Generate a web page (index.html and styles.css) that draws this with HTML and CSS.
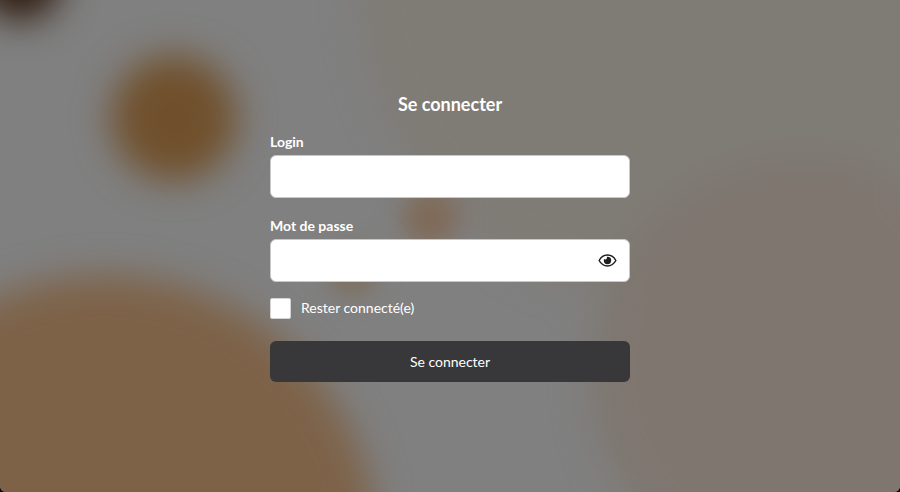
FILE: index.html
```html
<!DOCTYPE html>
<html lang="fr">
<head>
    <meta charset="UTF-8">
    <meta name="viewport" content="width=device-width, initial-scale=1.0">
    <title>Se connecter</title>
    <link rel="stylesheet" href="styles.css">
</head>
<body>
    <main class="page">
        <svg class="backdrop" viewBox="0 0 900 492" preserveAspectRatio="xMidYMid slice" aria-hidden="true">
            <defs>
                <filter id="blur" x="-60%" y="-60%" width="220%" height="220%" color-interpolation-filters="sRGB">
                    <feGaussianBlur stdDeviation="18"/>
                </filter>
                <filter id="blur-small" x="-60%" y="-60%" width="220%" height="220%" color-interpolation-filters="sRGB">
                    <feGaussianBlur stdDeviation="12"/>
                </filter>
            </defs>
            <g filter="url(#blur)">
                <circle cx="670" cy="-10" r="310" fill="#7f7b75"/>
                <circle cx="805" cy="375" r="215" fill="#7e766f"/>
                <circle cx="105" cy="547" r="272" fill="#7d6248"/>
                <circle cx="174" cy="118" r="63" fill="#70502c"/>
                <circle cx="20" cy="-22" r="42" fill="#2c190c"/>
            </g>
            <g filter="url(#blur-small)">
                <circle cx="430" cy="218" r="28" fill="#7f6a58"/>
                <circle cx="352" cy="272" r="24" fill="#7d6e5d"/>
            </g>
        </svg>

        <form class="login-form">
            <h1>Se connecter</h1>

            <div class="form-group">
                <label for="login">Login</label>
                <input type="text" id="login" class="text-input" autocomplete="username">
            </div>

            <div class="form-group">
                <label for="password">Mot de passe</label>
                <div class="password-field">
                    <input type="password" id="password" autocomplete="current-password">
                    <button type="button" class="toggle-password" aria-label="Afficher le mot de passe">
                        <svg viewBox="0 0 20 14" aria-hidden="true">
                            <path d="M1 7C3 3.300 6.200 1.200 10 1.200S17 3.300 19 7C17 10.700 13.800 12.800 10 12.800S3 10.700 1 7Z" fill="none" stroke="currentColor" stroke-width="1.600" stroke-linejoin="round"/>
                            <path d="M10 3a4 4 0 1 1-4 4c0-.5.1-1 .3-1.500.4.3.8.5 1.300.5A2 2 0 0 0 9.200 3.100c.3-.1.5-.1.800-.1Z" fill="currentColor"/>
                        </svg>
                    </button>
                </div>
            </div>

            <div class="remember">
                <input type="checkbox" id="remember">
                <label for="remember">Rester connecté(e)</label>
            </div>

            <button type="submit" class="btn-primary">Se connecter</button>
        </form>
    </main>
</body>
</html>
```

FILE: styles.css
```css
* {
    margin: 0;
    padding: 0;
    box-sizing: border-box;
}

body {
    font-family: Lato, sans-serif;
    font-size: 14px;
    line-height: 20px;
    color: white;
    background: #080c06;
}

.page {
    position: relative;
    min-height: 100vh;
    display: flex;
    align-items: center;
    justify-content: center;
    background: #808080;
    border-radius: 0 0 6px 6px;
    overflow: hidden;
}

.backdrop {
    position: absolute;
    inset: 0;
    width: 100%;
    height: 100%;
}

.login-form {
    position: relative;
    width: 40%;
    min-width: 280px;
    padding-bottom: 18px;
}

h1 {
    font-size: 18px;
    line-height: 24px;
    font-weight: 700;
    text-align: center;
    margin-bottom: 16px;
}

.form-group {
    margin-bottom: 18px;
}

.form-group label {
    display: block;
    font-weight: 700;
    margin-bottom: 3px;
}

.text-input,
.password-field {
    display: flex;
    width: 100%;
    height: 43px;
    background: white;
    border: 1px solid #c8c8c8;
    border-radius: 6px;
}

.text-input,
.password-field input {
    padding: 0 12px;
    font: inherit;
    color: #1f1f21;
}

.password-field input {
    flex: 1;
    min-width: 0;
    border: none;
    background: transparent;
}

.toggle-password {
    display: flex;
    align-items: center;
    padding: 0 12px;
    border: none;
    background: none;
    color: #1f1f21;
    cursor: pointer;
}

.toggle-password svg {
    width: 19px;
    height: 13px;
}

.remember {
    display: flex;
    align-items: flex-start;
    gap: 10px;
    margin-top: -2px;
    margin-bottom: 22px;
}

.remember input {
    appearance: none;
    width: 21px;
    height: 21px;
    background: white;
    border: 1px solid #d4d4d4;
    border-radius: 2px;
}

.remember input:checked {
    background: #38383a;
    border: 4px solid white;
}

.btn-primary {
    display: block;
    width: 100%;
    height: 41px;
    border: none;
    border-radius: 6px;
    background: #38383a;
    color: white;
    font: inherit;
    cursor: pointer;
}

.btn-primary:hover {
    background: #2c2c2e;
}
```
